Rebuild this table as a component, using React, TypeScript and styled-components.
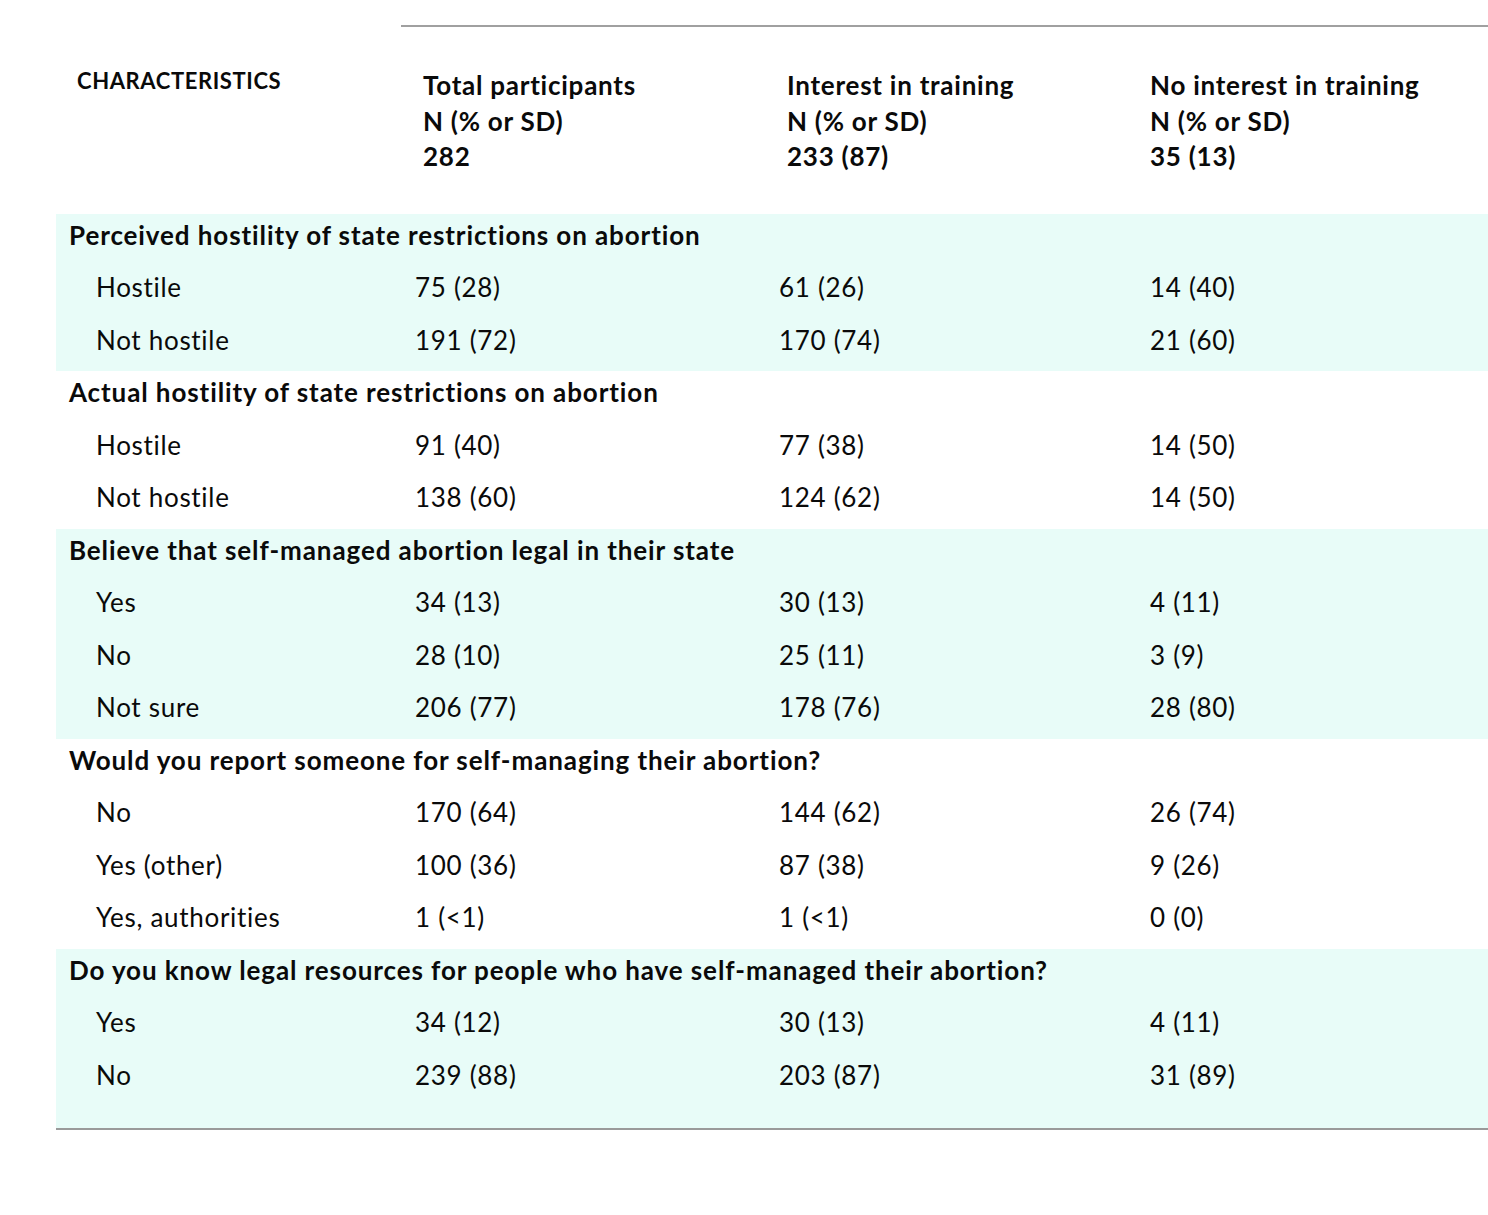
import React from "react";
import styled, { createGlobalStyle } from "styled-components";

const Global = createGlobalStyle`
  html, body { margin: 0; padding: 0; background: #fff; }
  body { font-family: Lato, "Open Sans", sans-serif; color: #0a0a0a; }
`;

const Page = styled.div`
  padding: 25px 0 0 56px;
`;

const TopRule = styled.div`
  margin-left: 345px;
  height: 2px;
  background: #a0a0a0;
`;

const Cols = `
  display: grid;
  grid-template-columns: 359px 364px 371px 1fr;
`;

const Head = styled.div`
  ${Cols}
  padding: 41px 0 39px;
  font-weight: 700;
  font-size: 26px;
  letter-spacing: 0.75px;
  line-height: 35.5px;
`;

const HeadCell = styled.div<{ $pad: number }>`
  padding-left: ${(p) => p.$pad}px;
  white-space: nowrap;
`;

const Caps = styled.div`
  font-size: 22px;
  letter-spacing: 0.6px;
  line-height: 28px;
  margin-top: -1px;
`;

const Band = styled.div<{ $shade: boolean; $last?: boolean }>`
  background: ${(p) => (p.$shade ? "#e8fcf8" : "transparent")};
  padding-bottom: ${(p) => (p.$last ? "22px" : "0")};
  border-bottom: ${(p) => (p.$last ? "2px solid #9a9a9a" : "none")};
`;

const Row = styled.div`
  ${Cols}
  height: 52.5px;
  line-height: 42px;
  font-size: 26px;
  letter-spacing: 0.7px;
  white-space: nowrap;
`;

const Title = styled.div`
  grid-column: 1 / -1;
  padding-left: 13px;
  font-weight: 700;
  letter-spacing: 0.9px;
`;

const Label = styled.div`
  padding-left: 40px;
`;

const Cell = styled.div``;

type Section = { title: string; rows: [string, string, string, string][] };

const sections: Section[] = [
  {
    title: "Perceived hostility of state restrictions on abortion",
    rows: [
      ["Hostile", "75 (28)", "61 (26)", "14 (40)"],
      ["Not hostile", "191 (72)", "170 (74)", "21 (60)"],
    ],
  },
  {
    title: "Actual hostility of state restrictions on abortion",
    rows: [
      ["Hostile", "91 (40)", "77 (38)", "14 (50)"],
      ["Not hostile", "138 (60)", "124 (62)", "14 (50)"],
    ],
  },
  {
    title: "Believe that self-managed abortion legal in their state",
    rows: [
      ["Yes", "34 (13)", "30 (13)", "4 (11)"],
      ["No", "28 (10)", "25 (11)", "3 (9)"],
      ["Not sure", "206 (77)", "178 (76)", "28 (80)"],
    ],
  },
  {
    title: "Would you report someone for self-managing their abortion?",
    rows: [
      ["No", "170 (64)", "144 (62)", "26 (74)"],
      ["Yes (other)", "100 (36)", "87 (38)", "9 (26)"],
      ["Yes, authorities", "1 (<1)", "1 (<1)", "0 (0)"],
    ],
  },
  {
    title: "Do you know legal resources for people who have self-managed their abortion?",
    rows: [
      ["Yes", "34 (12)", "30 (13)", "4 (11)"],
      ["No", "239 (88)", "203 (87)", "31 (89)"],
    ],
  },
];

const App: React.FC = () => {
  return (
    <Page>
      <Global />
      <TopRule />
      <Head>
        <HeadCell $pad={21}>
          <Caps>CHARACTERISTICS</Caps>
        </HeadCell>
        <HeadCell $pad={8}>
          Total participants<br />N (% or SD)<br />282
        </HeadCell>
        <HeadCell $pad={8}>
          Interest in training<br />N (% or SD)<br />233 (87)
        </HeadCell>
        <HeadCell $pad={0}>
          No interest in training<br />N (% or SD)<br />35 (13)
        </HeadCell>
      </Head>
      {sections.map((s, i) => (
        <Band key={s.title} $shade={i % 2 === 0} $last={i === sections.length - 1}>
          <Row>
            <Title>{s.title}</Title>
          </Row>
          {s.rows.map((r) => (
            <Row key={r[0]}>
              <Label>{r[0]}</Label>
              <Cell>{r[1]}</Cell>
              <Cell>{r[2]}</Cell>
              <Cell>{r[3]}</Cell>
            </Row>
          ))}
        </Band>
      ))}
    </Page>
  );
};

export default App;
